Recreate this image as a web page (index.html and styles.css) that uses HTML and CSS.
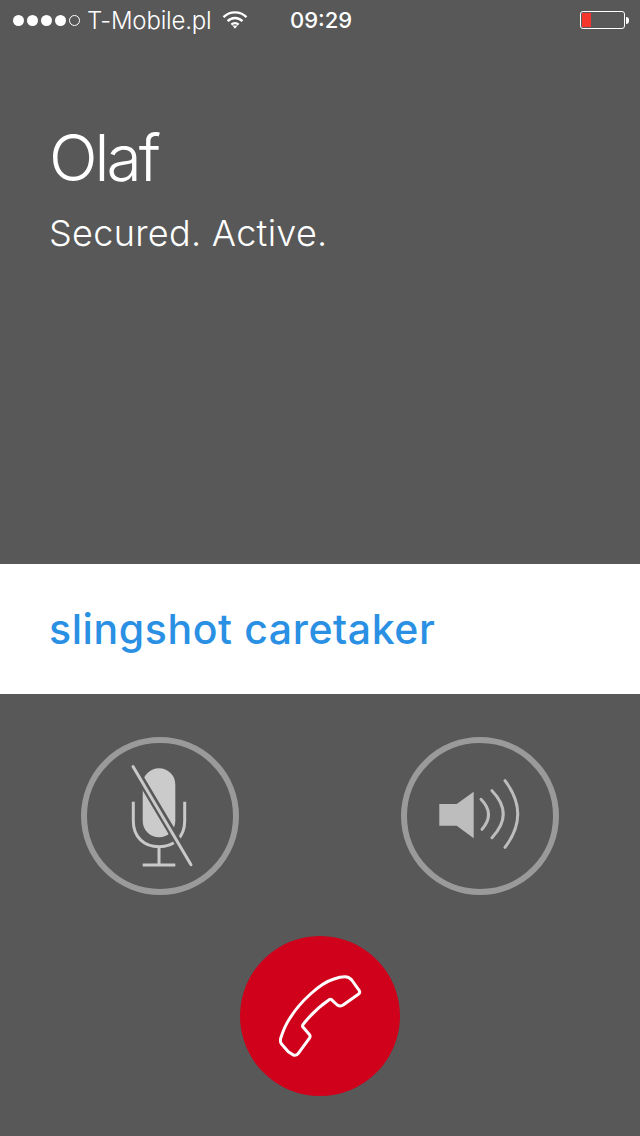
FILE: index.html
```html
<!DOCTYPE html>
<html lang="en">
<head>
<meta charset="UTF-8" />
<meta name="viewport" content="width=device-width, initial-scale=1" />
<title>Call</title>
<link rel="stylesheet" href="styles.css">
</head>
<body>

<header class="status-bar">
  <div class="signal">
    <span class="dot"></span>
    <span class="dot"></span>
    <span class="dot"></span>
    <span class="dot"></span>
    <span class="dot dot-empty"></span>
  </div>
  <span class="carrier">T-Mobile.pl</span>
  <svg class="wifi" width="26" height="20" viewBox="0 0 26 20" fill="none" stroke="#fff" stroke-width="2.4">
    <path d="M1.5 7.2C7.8 .8 18.2 .8 24.5 7.2" />
    <path d="M5.6 11.2C9.8 7 16.2 7 20.4 11.2" />
    <path d="M9.4 14.6C11.4 12.8 14.6 12.8 16.6 14.6" />
    <path d="M10.4 15.6L13 18.8L15.6 15.6Z" fill="#fff" stroke="none" />
  </svg>
  <span class="time">09:29</span>
  <div class="battery">
    <div class="battery-body"><div class="battery-level"></div></div>
    <div class="battery-tip"></div>
  </div>
</header>

<section class="caller">
  <h1 class="caller-name">Olaf</h1>
  <p class="caller-state">Secured. Active.</p>
</section>

<section class="passphrase">slingshot caretaker</section>

<section class="controls">
  <div class="controls-row">
    <button class="round-btn" type="button" aria-label="Mute">
      <svg width="146" height="146" viewBox="6 6 146 146" fill="none">
        <path d="M52.3 64.7V84C52.3 100 63 109.7 78 109.7S103.7 100 103.7 84V64.7" stroke="#c9c9c9" stroke-width="3" />
        <path d="M78 109.7V128M61.7 128H94.3" stroke="#c9c9c9" stroke-width="3" />
        <rect x="61.7" y="31.3" width="32.6" height="69" rx="16.3" fill="#cbcbcb" />
        <path d="M53 31L110 127" stroke="#585858" stroke-width="8" />
        <path d="M52 29.5L110 127.8" stroke="#c9c9c9" stroke-width="3" stroke-linecap="round" />
      </svg>
    </button>
    <button class="round-btn" type="button" aria-label="Speaker">
      <svg width="146" height="146" viewBox="6 6 146 146" fill="none">
        <path d="M38.3 67H55.7L72.7 54.7V101.3L55.7 88.7H38.3Z" fill="#bdbdbd" />
        <g stroke="#bdbdbd" stroke-width="3" stroke-linecap="round">
          <path d="M80 62.3Q94.5 77 81 92.3" />
          <path d="M91 53.7Q113.5 77 91 100.7" />
          <path d="M104 43.7Q129.5 77 104 110.3" />
        </g>
      </svg>
    </button>
  </div>
  <button class="end-btn" type="button" aria-label="End call">
    <svg width="160" height="160" viewBox="0 0 160 160" fill="none">
      <path d="M105 40.7C108 40.7 110 41.8 111.7 44L119.3 54.7C120 56 119.6 57.4 118.3 58.3L103.5 68.8C101.7 70 99.3 70.3 97.3 69L92.5 64.6C91.5 63 90.6 63 89.5 63.5C80 70 71 78.5 64 87.3C62.7 88.5 62.3 89.7 62.7 90.7L69.6 98.7C70.4 99.8 70.2 101 69.3 102.3L58.3 117.3C57 119.2 55 119.6 53.3 119L48.3 115.7L41.5 108C40.4 106.4 40.3 104 40.7 102.3C43 95 46 88 50 82C60 66 80 47 94 43C98 41.5 102 40.7 105 40.7Z" stroke="#fff" stroke-width="3" stroke-linejoin="round" />
    </svg>
  </button>
</section>

</body>
</html>
```

FILE: styles.css
```css
* {
  box-sizing: border-box;
}

body {
  margin: 0;
  width: 640px;
  height: 1136px;
  background: #585858;
  color: #fff;
  font-family: Inter, 'Liberation Sans', sans-serif;
  overflow: hidden;
}

/* Status bar */
.status-bar {
  display: flex;
  align-items: center;
  height: 40px;
  padding-left: 13px;
  font-size: 24px;
}

.signal {
  display: flex;
  gap: 3px;
  width: 74px;
}

.dot {
  width: 11px;
  height: 11px;
  border-radius: 50%;
  background: #fff;
}

.dot-empty {
  background: none;
  border: 1px solid #fff;
}

.carrier {
  width: 135px;
  font-weight: 300;
  letter-spacing: -0.2px;
}

.wifi {
  margin-right: 42px;
}

.time {
  width: 290px;
  font-size: 22px;
  font-weight: 500;
}

.battery {
  display: flex;
  align-items: center;
}

.battery-body {
  width: 45px;
  height: 18px;
  padding: 1px;
  border: 1px solid #fff;
  border-radius: 3px;
}

.battery-level {
  width: 9px;
  height: 100%;
  background: #f4372d;
}

.battery-tip {
  width: 3px;
  height: 7px;
  margin-left: 1px;
  background: #fff;
  border-radius: 0 3px 3px 0;
}

/* Caller */
.caller {
  height: 524px;
  padding: 80px 0 0 49px;
}

.caller-name {
  margin: 0;
  font-size: 64px;
  font-weight: 300;
  line-height: 76px;
  letter-spacing: -3px;
}

.caller-state {
  margin: 16px 0 0;
  font-size: 36px;
  font-weight: 350;
  line-height: 42px;
  letter-spacing: 0.3px;
}

/* Words to read out */
.passphrase {
  height: 130px;
  padding-left: 49px;
  background: #fff;
  color: #2a90e4;
  font-size: 41px;
  font-weight: 550;
  line-height: 130px;
  letter-spacing: 0.6px;
}

/* Buttons */
.controls {
  display: flex;
  flex-direction: column;
  align-items: center;
  padding-top: 43px;
}

.controls-row {
  display: flex;
  gap: 162px;
}

.round-btn {
  display: flex;
  align-items: center;
  justify-content: center;
  width: 158px;
  height: 158px;
  padding: 0;
  background: none;
  border: 6px solid #9a9a9a;
  border-radius: 50%;
}

.end-btn {
  display: block;
  width: 160px;
  height: 160px;
  margin-top: 41px;
  padding: 0;
  background: #d0021b;
  border: none;
  border-radius: 50%;
}

.end-btn svg {
  display: block;
}
```
